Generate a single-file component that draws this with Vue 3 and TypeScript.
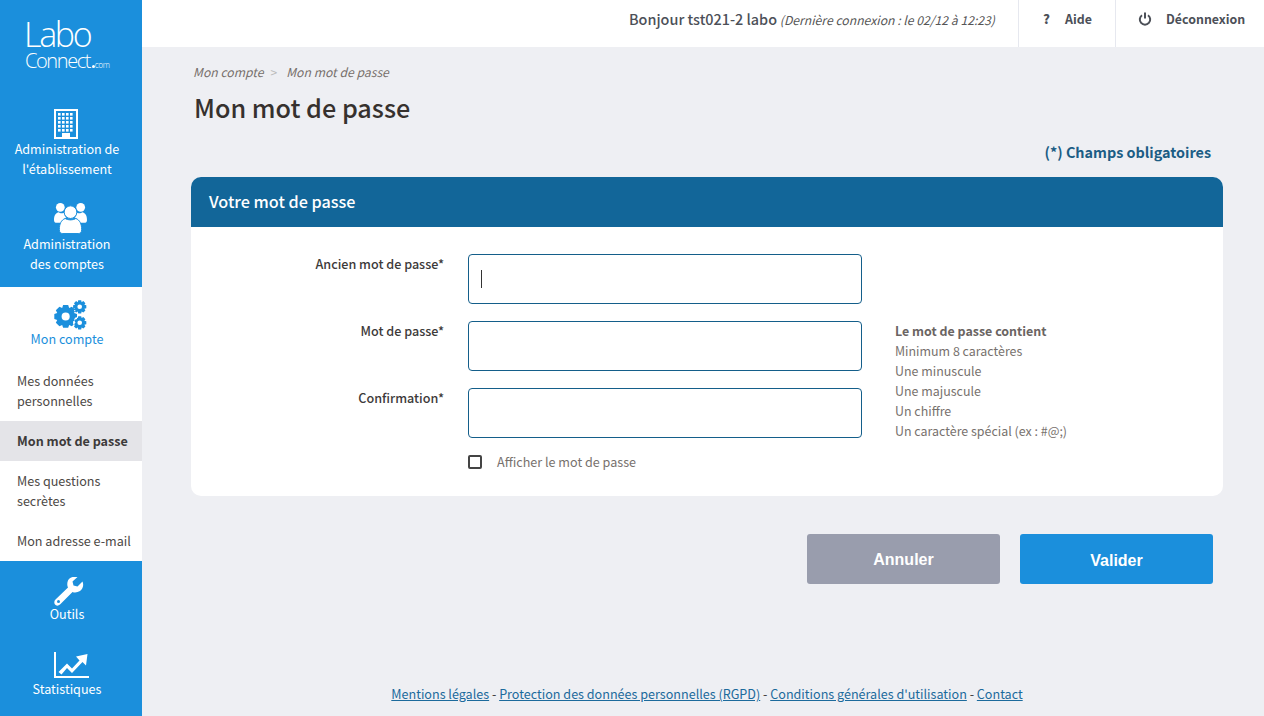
<script setup lang="ts">
function gear(cx: number, cy: number, ro: number, ri: number, hole: number, teeth: number): string {
  const pts: string[] = []
  const step = (Math.PI * 2) / teeth
  for (let i = 0; i < teeth; i++) {
    const a = i * step
    const offs: [number, number][] = [
      [-0.5, ri], [-0.28, ro], [0.28, ro], [0.5, ri]
    ]
    for (const [o, r] of offs) {
      const t = a + o * step
      pts.push(`${(cx + r * Math.cos(t)).toFixed(2)} ${(cy + r * Math.sin(t)).toFixed(2)}`)
    }
  }
  const c = `M${cx - hole} ${cy}a${hole} ${hole} 0 1 0 ${hole * 2} 0a${hole} ${hole} 0 1 0 ${-hole * 2} 0Z`
  return `M${pts.join('L')}Z${c}`
}
const gearPath = gear(12, 17, 12, 9.4, 4.2, 8) + gear(26.5, 7, 7, 5.2, 2.4, 8) + gear(26.5, 23.5, 7, 5.2, 2.4, 8)
const windows: { x: number; y: number }[] = []
for (let r = 0; r < 5; r++) for (let c = 0; c < 4; c++) windows.push({ x: 4 + c * 4, y: 4 + r * 4 })
const hints = ['Minimum 8 caractères', 'Une minuscule', 'Une majuscule', 'Un chiffre', 'Un caractère spécial (ex : #@;)']
</script>

<template>
  <div class="app">
    <aside class="side">
      <div class="logo">
        <div class="logo-a">Labo</div>
        <div class="logo-b">Connect<i class="dot"></i><small>com</small></div>
      </div>
      <a class="nav first">
        <svg class="ic" width="24" height="30" viewBox="0 0 24 30">
          <path fill="#fff" fill-rule="evenodd" d="M0 0h24v30H0ZM2 2v26h6v-4h8v4h6V2Z" />
          <rect v-for="(w, i) in windows" :key="i" :x="w.x" :y="w.y" width="2.6" height="2.6" fill="#fff" />
        </svg>
        <span>Administration de<br />l'établissement</span>
      </a>
      <a class="nav second">
        <svg class="ic" width="33" height="32" viewBox="0 0 34 32">
          <g fill="#fff">
            <circle cx="6.5" cy="5" r="4.5" /><circle cx="27.5" cy="5" r="4.5" />
            <path d="M0 18c0-5 2-7.500 5-8 1 1 3 1.500 5 .5 .5 2 1.500 4 2.500 5-2 1-4 3-4.500 5.500H3c-2 0-3-1-3-3Z" />
            <path d="M34 18c0-5-2-7.500-5-8-1 1-3 1.500-5 .5-.5 2-1.500 4-2.500 5 2 1 4 3 4.500 5.500h5c2 0 3-1 3-3Z" />
          </g>
          <circle cx="17" cy="10" r="6.500" fill="#fff" stroke="#1b8fdc" stroke-width="1" />
          <path fill="#fff" stroke="#1b8fdc" stroke-width="1" d="M9 32c-2 0-3.500-1-3.500-4 0-6 2-10 6-11.500 3 2 8 2 11 0 4 1.500 6 5.500 6 11.500 0 3-1.500 4-3.500 4Z" />
        </svg>
        <span>Administration<br />des comptes</span>
      </a>
      <div class="open">
        <a class="nav third">
          <svg class="ic" width="33" height="31" viewBox="0 0 34 32"><path fill="#1b8fdc" fill-rule="evenodd" :d="gearPath" /></svg>
          <span>Mon compte</span>
        </a>
        <ul class="sub">
          <li>Mes données<br />personnelles</li>
          <li class="on">Mon mot de passe</li>
          <li>Mes questions<br />secrètes</li>
          <li>Mon adresse e-mail</li>
        </ul>
      </div>
      <a class="nav fourth">
        <svg class="ic" width="30" height="29" viewBox="0 0 30 29">
          <path fill="#fff" d="M28.500 4.500 23.500 9.500l-4-1-1-4 5-4.500c-4-1-8 .5-9.500 3.500-1 2.500-1 5 0 7L1.500 22.500c-1.500 1.500-1.500 3.500-.5 5s3.500 1.500 5 0L18.500 15c2.500 1 5 .5 7.500-1 3-2 4-6 2.500-9.500Z" />
          <circle cx="4.500" cy="24.500" r="1.500" fill="#1b8fdc" />
        </svg>
        <span>Outils</span>
      </a>
      <a class="nav fifth">
        <svg class="ic" width="35" height="26" viewBox="0 0 35 26">
          <path fill="#fff" d="M0 0h2v24h33v2H0Z" />
          <path fill="#fff" d="M4.500 20 13 11.500l5 5 7.500-8L22 4.500 33.500 2 32 13.500l-3.500-3.500L18 21l-5-5-5.500 6.500Z" />
        </svg>
        <span>Statistiques</span>
      </a>
    </aside>

    <div class="right">
      <header class="top">
        <div class="hello"><b>Bonjour tst021-2 labo</b> <i>(Dernière connexion : le 02/12 à 12:23)</i></div>
        <a class="tool aide"><b class="q">?</b>Aide</a>
        <a class="tool deco">
          <svg width="14" height="14" viewBox="0 0 14 14" fill="none" stroke="#4c5058" stroke-width="2">
            <path d="M4 3.200a5.200 5.200 0 1 0 6 0" /><path d="M7 .5v6" />
          </svg>
          Déconnexion
        </a>
      </header>

      <main class="main">
        <div class="crumb"><i>Mon compte</i><span class="sep">&gt;</span><i>Mon mot de passe</i></div>
        <h1>Mon mot de passe</h1>
        <div class="req">(*) Champs obligatoires</div>

        <section class="card">
          <h2>Votre mot de passe</h2>
          <div class="body">
            <div class="form">
              <div class="row">
                <label>Ancien mot de passe*</label>
                <div class="field"><input class="inp" type="password" /><span class="caret"></span></div>
              </div>
              <div class="row">
                <label>Mot de passe*</label>
                <div class="field"><input class="inp" type="password" /></div>
              </div>
              <div class="row">
                <label>Confirmation*</label>
                <div class="field"><input class="inp" type="password" /></div>
              </div>
              <div class="check"><span class="box"></span><span>Afficher le mot de passe</span></div>
            </div>
            <div class="hints">
              <b>Le mot de passe contient</b>
              <div v-for="h in hints" :key="h">{{ h }}</div>
            </div>
          </div>
        </section>

        <div class="actions">
          <button class="btn grey" type="button">Annuler</button>
          <button class="btn blue" type="button">Valider</button>
        </div>

        <footer class="foot">
          <a>Mentions légales</a> - <a>Protection des données personnelles (RGPD)</a> - <a>Conditions générales d'utilisation</a> - <a>Contact</a>
        </footer>
      </main>
    </div>
  </div>
</template>

<style>
html, body { margin: 0; padding: 0; overflow: hidden; }
</style>

<style scoped>
.app {
  display: flex;
  width: 1264px;
  height: 716px;
  overflow: hidden;
  font-family: "Noto Sans CJK SC", "Noto Sans", sans-serif;
  font-size: 12.6px;
  line-height: 20px;
  color: #3d3a3a;
  background: #eeeff3;
}
.side {
  width: 142px;
  flex: none;
  background: #1b8fdc;
  color: #fff;
  display: flex;
  flex-direction: column;
}
.logo {
  height: 92px;
  box-sizing: border-box;
  padding: 16px 0 0 24px;
  font-family: "Open Sans", sans-serif;
  font-weight: 300;
}
.logo-a { font-size: 34px; line-height: 36px; letter-spacing: -2.3px; }
.logo-b { font-size: 20px; line-height: 18px; letter-spacing: -1.4px; padding-left: 1px; display: flex; align-items: baseline; }
.logo-b small { font-size: 8.2px; letter-spacing: -.3px; }
.dot { width: 3px; height: 3px; background: #fff; border-radius: 50%; margin: 0 0 0 1.5px; }
.nav {
  display: flex;
  flex-direction: column;
  align-items: center;
  text-align: center;
  width: 134px;
}
.ic { display: block; align-self: flex-start; margin-left: 54px; }
.first { padding-top: 17px; }
.second { padding: 23px 0 13px; }
.open { background: #fff; color: #3d3a3a; }
.third { padding-top: 13px; color: #1b8fdc; }
.third span { margin-top: -2px; }
.sub { list-style: none; margin: 12px 0 0; padding: 0; color: #4c4845; }
.sub li { padding: 10px 0 10px 17px; }
.sub li.on { background: #e4e4e8; font-weight: 700; color: #3d3a3a; }
.fourth { padding-top: 16px; }
.fourth span { margin-top: -2px; }
.fifth { padding-top: 28px; }
.fifth span { margin-top: 1px; }

.right { flex: 1; min-width: 0; display: flex; flex-direction: column; }
.top {
  height: 47px;
  flex: none;
  background: #fff;
  display: flex;
  justify-content: flex-end;
  align-items: stretch;
  color: #4c5058;
}
.hello { align-self: center; padding-right: 23px; margin-top: -9px; }
.hello b { font-size: 14.4px; font-weight: 500; }
.hello i { font-size: 12.2px; color: #565656; }
.tool {
  display: flex;
  align-items: center;
  border-left: 1px solid #e6e8ef;
  font-weight: 700;
  font-size: 12.4px;
  padding-bottom: 9px;
  box-sizing: border-box;
}
.aide { width: 97px; padding-left: 24px; }
.q { width: 22px; font-size: 13px; }
.deco { width: 149px; padding-left: 22px; gap: 14px; }

.main { flex: 1; min-height: 0; display: flex; flex-direction: column; padding: 0 41px 0 49px; position: relative; }
.crumb { padding: 15px 0 0 3px; color: #77706c; font-size: 12.2px; display: flex; margin-left: -1px; }
.sep { color: #bbb; margin: 0 9px 0 7px; font-size: 12px; }
h1 { margin: 7px 0 0 3px; font-size: 25.2px; line-height: 36px; font-weight: 500; color: #36312e; }
.req { margin: 17px 12px 0 0; text-align: right; font-size: 14.4px; line-height: 20px; font-weight: 700; color: #1c5d85; }
.card { margin-top: 15px; background: #fff; border-radius: 10px; overflow: hidden; height: 319px; flex: none; }
h2 { margin: 0; height: 50px; background: #126699; color: #fff; padding: 0 18px; font-size: 16.2px; line-height: 49px; font-weight: 500; }
.body { display: flex; }
.form { padding-top: 27px; width: 671px; flex: none; }
.row { display: flex; height: 50px; margin-bottom: 17px; }
.row label { width: 253px; text-align: right; font-weight: 500; font-size: 12.6px; color: #3d3a3a; }
.field { position: relative; margin-left: 24px; width: 394px; }
.inp {
  display: block;
  width: 100%;
  height: 50px;
  box-sizing: border-box;
  border: 1px solid #145e8a;
  border-radius: 4px;
  background: #fff;
  outline: none;
}
.caret { position: absolute; left: 13px; top: 16px; width: 1px; height: 18px; background: #333; }
.check { display: flex; align-items: center; margin: -3px 0 0 277px; color: #77716d; height: 20px; }
.box { width: 14px; height: 14px; box-sizing: border-box; border: 2px solid #444; border-radius: 2px; margin-right: 15px; }
.hints { padding-top: 94px; color: #77716d; margin-left: 33px; font-size: 12.45px; }
.hints b { font-weight: 700; color: #6a6462; }
.actions { display: flex; justify-content: flex-end; gap: 20px; margin: 38px 10px 0 0; }
.btn {
  width: 193px;
  height: 50px;
  border: 0;
  border-radius: 3px;
  color: #fff;
  font-family: "Liberation Sans", Arial, sans-serif;
  font-size: 16px;
  font-weight: 700;
  padding: 0;
}
.grey { background: #999dad; padding-top: 2px; }
.blue { background: #1b8fdc; padding-top: 4px; }
.foot {
  margin-top: auto;
  padding-bottom: 12px;
  text-align: center;
  color: #3d3a3a;
  font-size: 12.58px;
}
.foot a { color: #1c6a9c; text-decoration: underline; }
</style>
